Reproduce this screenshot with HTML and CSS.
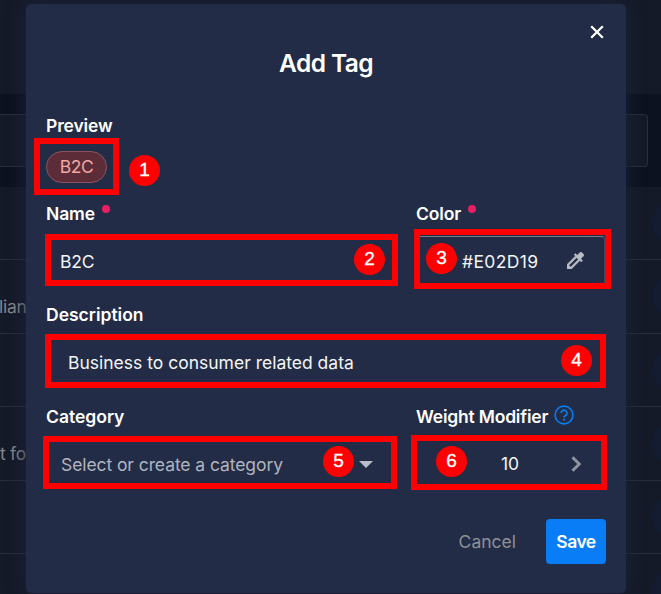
FILE: index.html
```html
<!DOCTYPE html>
<html lang="en">
<head>
<meta charset="utf-8">
<title>Add Tag</title>
<link rel="stylesheet" href="styles.css">
</head>
<body>
<div class="page">
  <div class="topbar"></div>
  <div class="searchband"><div class="search"></div></div>
  <div class="row row-first"><i class="dot"></i></div>
  <div class="row"><span class="peek">lian</span><i class="dot"></i></div>
  <div class="row"><i class="dot"></i></div>
  <div class="row"><span class="peek peek-for">t fo</span><i class="dot"></i></div>
  <div class="row"><i class="dot"></i></div>
  <div class="row"><i class="dot"></i></div>
</div>
<div class="modal">
  <button class="close" aria-label="Close"><svg width="14" height="14" viewBox="0 0 14 14"><path d="M1.2 1.2L12.8 12.8M12.8 1.2L1.2 12.8" stroke="#fff" stroke-width="2.3"/></svg></button>
  <h1 class="title">Add Tag</h1>
  <div class="label"><span class="t-preview">Preview</span></div>
  <div class="preview">
    <div class="mark mark-tag"><span class="tag">B2C</span></div>
    <b class="step">1</b>
  </div>
  <div class="cols labels-name">
    <div class="label"><span class="t-name">Name</span><i class="req"></i></div>
    <div class="label"><span class="t-color">Color</span><i class="req"></i></div>
  </div>
  <div class="cols fields-name">
    <div class="mark field name"><span class="value t-b2c">B2C</span><b class="step">2</b></div>
    <div class="mark field color">
      <div class="color-inner"><b class="step">3</b><span class="value t-hex">#E02D19</span>
      <svg class="dropper" width="17" height="17" viewBox="3 3 18 18"><path fill="#babdc4" stroke="#babdc4" stroke-width=".5" d="M20.71 5.63l-2.34-2.34a1 1 0 0 0-1.41 0l-3.12 3.12-1.93-1.91-1.41 1.41 1.42 1.42L3 16.25V21h4.75l8.92-8.92 1.42 1.42 1.41-1.41-1.92-1.92 3.12-3.12c.4-.4.4-1.03.01-1.42zM6.92 19L5 17.08l8.06-8.06 1.92 1.92L6.92 19z"/></svg></div>
    </div>
  </div>
  <div class="label label-desc"><span class="t-desc">Description</span></div>
  <div class="mark field desc"><span class="value t-business">Business to consumer related data</span><b class="step">4</b></div>
  <div class="cols labels-cat">
    <div class="label"><span class="t-cat">Category</span></div>
    <div class="label"><span class="t-weight">Weight Modifier</span><svg class="help" width="20" height="20" viewBox="0 0 20 20" fill="none" stroke="#087df1"><circle cx="10" cy="10" r="8.9" stroke-width="1.6"/><path d="M7.1 8.1a2.9 2.9 0 1 1 4.6 2.3C10.5 11.2 10 11.5 10 12.6" stroke-width="1.7"/><path d="M10 13.8v1.7" stroke-width="1.9"/></svg></div>
  </div>
  <div class="cols fields-cat">
    <div class="mark field category"><span class="value t-select">Select or create a category</span><b class="step">5</b><i class="caret"></i></div>
    <div class="mark field weight"><b class="step">6</b><span class="value t-ten">10</span><svg class="chev" width="11" height="16" viewBox="0 0 11 16"><path d="M1.5 1.3L8.2 8L1.5 14.7" fill="none" stroke="#9094a0" stroke-width="3"/></svg></div>
  </div>
  <div class="footer"><button class="cancel">Cancel</button><button class="save">Save</button></div>
</div>
</body>
</html>
```
FILE: styles.css
```css
* { box-sizing: border-box; }
body { margin: 0; width: 661px; height: 594px; overflow: hidden; position: relative; background: #151a29; color: #fff; font: 500 17.5px/20px Inter, "Liberation Sans", sans-serif; }
button { font: inherit; border: 0; padding: 0; background: none; color: inherit; }
h1 { margin: 0; }
span { white-space: nowrap; }
.page { height: 594px; overflow: hidden; }
.topbar { height: 94px; }
.searchband { height: 93px; background: #0d1220; padding: 20px 13px 20px 0; }
.search { height: 53px; background: #151a29; border: 1px solid #292e3c; border-left: 0; border-radius: 0 4px 4px 0; }
.row { height: 73.5px; border-bottom: 1px solid #292e3b; display: flex; align-items: center; }
.row-first { height: 73px; }
.peek { color: #85878c; font-weight: 400; font-size: 17.5px; letter-spacing: -.3px; margin: 21px 0 0 -1px; }
.peek-for { margin-left: 0; }
.dot { width: 40px; height: 40px; flex: none; border-radius: 50%; background: #141c31; margin-left: auto; margin-right: -31px; }
.modal { position: absolute; left: 26px; top: 4px; width: 600px; height: 589px; border-radius: 5px; background: #232c46; box-shadow: 0 0 18px #1a243a; }
.close { position: absolute; left: 564px; top: 21px; width: 14px; height: 14px; }
.close svg { display: block; }
.title { height: 112px; padding-top: 44px; text-align: center; font-size: 24.5px; line-height: 30px; font-weight: 600; letter-spacing: -.6px; }
.label { height: 20px; margin-left: 20px; display: flex; font-weight: 600; letter-spacing: -.15px; }
.t-desc, .t-cat { letter-spacing: 0; }
.t-weight { letter-spacing: -.2px; }
.cols { display: grid; grid-template-columns: 370px 1fr; align-items: start; }
.preview { display: flex; height: 57px; margin: 2px 0 9px 8px; align-items: center; }
.mark { border: 6px solid #f00; }
.mark-tag { width: 85px; height: 57px; display: flex; align-items: center; justify-content: center; margin-right: 10px; }
.tag { width: 61px; height: 32px; border: 1px solid #8b525d; border-radius: 16px; background: #5c2d39; color: #f2a7a1; text-align: center; line-height: 30px; font-weight: 400; letter-spacing: -.4px; }
.preview .step { margin-top: 7px; }
.step { flex: none; width: 31px; height: 31px; border-radius: 50%; background: #f00; text-align: center; font: 400 19px/29px "Liberation Sans", sans-serif; -webkit-text-stroke: .35px #fff; }
.req { width: 8px; height: 8px; border-radius: 50%; background: #e91e63; margin: 1px 0 0 7px; }
.field { display: flex; align-items: center; }
.value { font-weight: 400; color: #f4f5f7; }
.t-b2c { letter-spacing: -.2px; }
.t-hex { width: 78px; letter-spacing: .35px; }
.fields-name { height: 60px; margin-top: 5px; }
.name { width: 353px; height: 52px; margin: 5px 0 0 19px; padding: 3px 7px 0 9px; justify-content: space-between; }
.name .step { margin-top: -4px; }
.color { width: 197px; height: 60px; margin-left: 18px; align-items: stretch; }
.color-inner { flex: 1; display: flex; align-items: center; margin: 1px 0 0; border: 1px solid #777c89; border-left: 0; border-bottom: 0; border-right-color: #3f475d; border-radius: 0 4px 0 0; padding: 3px 0 0 6px; }
.color .step { margin: -6px 5px 0 0; }
.dropper { margin: -2px 0 0 27px; }
.label-desc { margin-top: 16px; }
.desc { width: 561px; height: 54px; margin: 9px 0 0 19px; padding: 3px 8px 0 17px; justify-content: space-between; }
.desc .step { margin-top: -4px; }
.labels-cat { margin-top: 19px; }
.help { margin: -2px 0 0 6px; }
.fields-cat { height: 55px; margin-top: 8px; }
.category { width: 354px; height: 53px; margin: 1px 0 0 17px; padding: 4px 0 0 12px; }
.t-select { width: 262px; color: #b0b4bf; letter-spacing: -.08px; }
.category .step { margin-top: -6px; }
.caret { border: 7px solid transparent; border-top-color: #babdc7; border-bottom: 0; margin: 0 0 0 5px; }
.weight { width: 196px; height: 55px; margin-left: 15px; padding: 2px 0 0 19px; }
.weight .step { margin-right: 34px; margin-top: -4px; }
.t-ten { width: 20px; }
.chev { margin: 1px 0 0 50px; }
.footer { display: flex; justify-content: flex-end; height: 45px; margin: 29px 20px 0 0; }
.cancel { color: #8e9095; font-weight: 400; margin-right: 30px; }
.save { width: 60px; height: 45px; border-radius: 4px; background: #087df6; font-weight: 600; letter-spacing: -.5px; }
```
